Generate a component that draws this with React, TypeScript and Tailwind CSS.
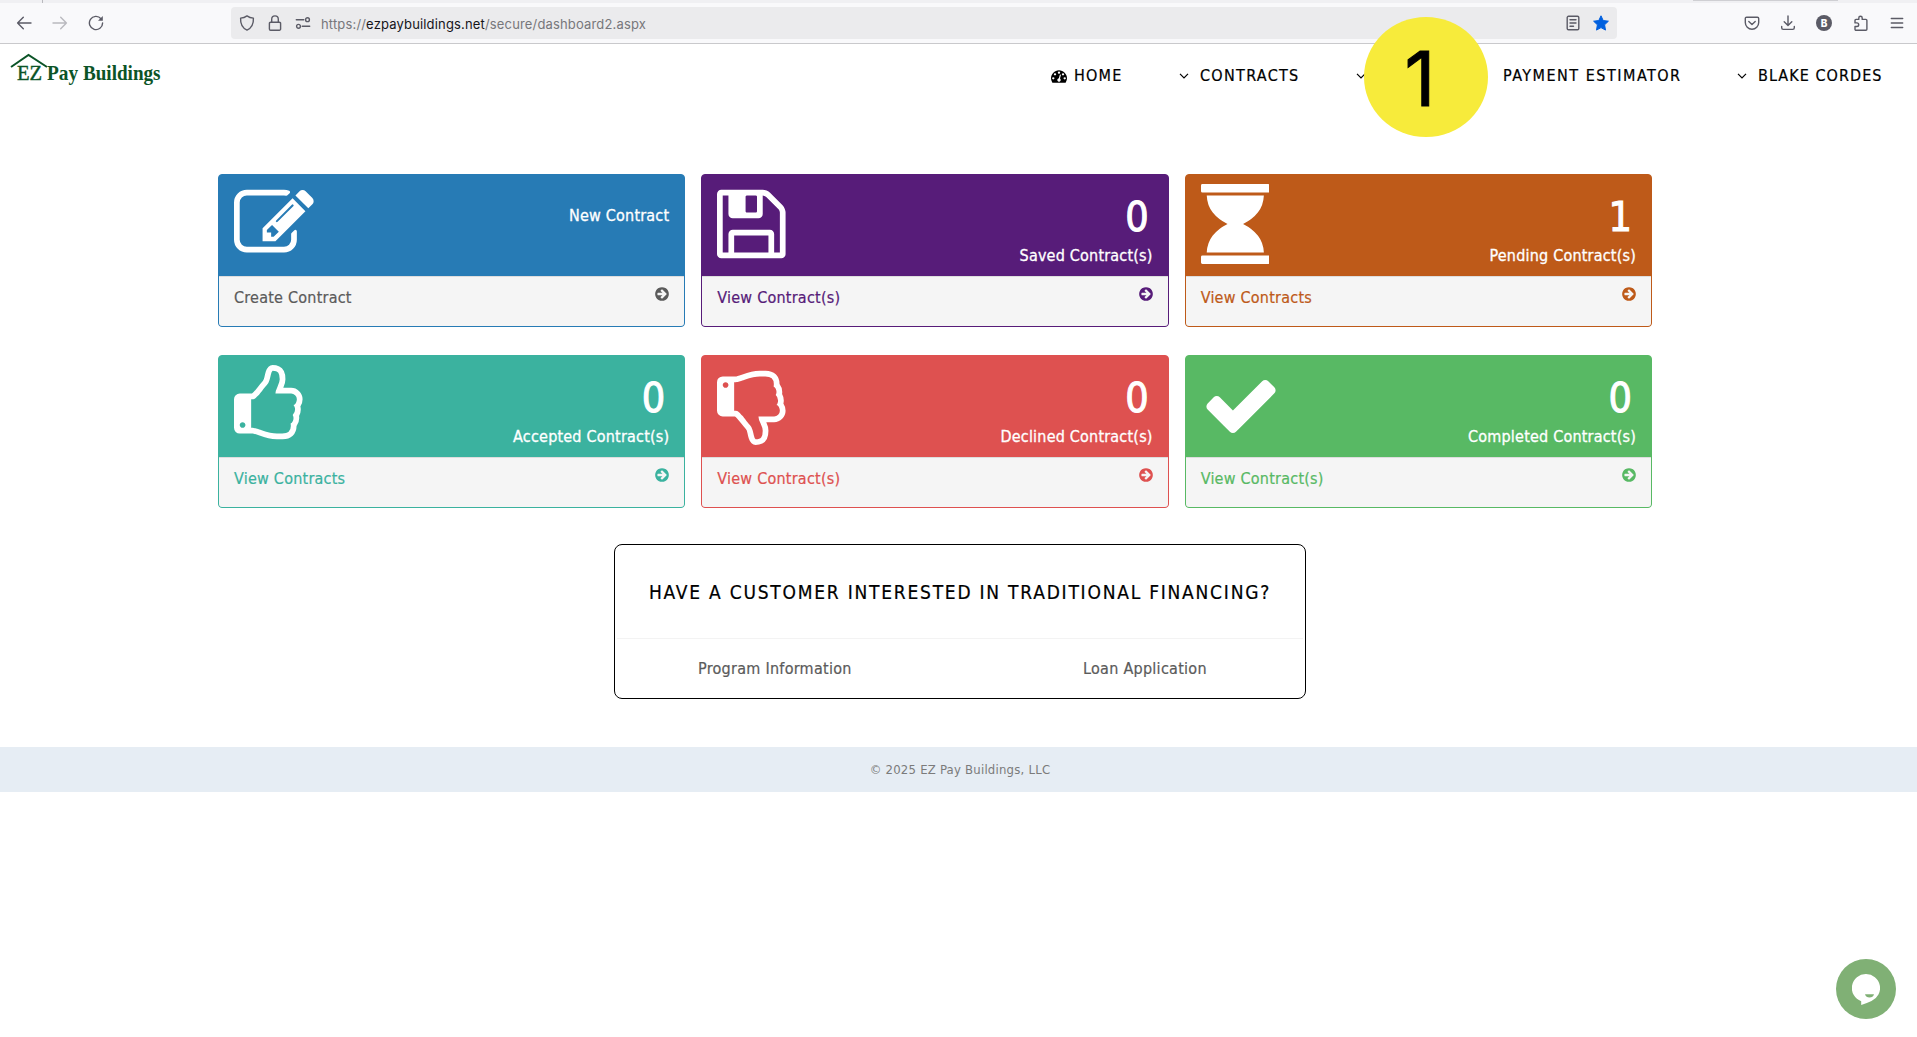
import type { ReactNode } from "react";

const PATHS = {
  edit: "M888 1184l116-116-152-152-116 116v56h96v96h56zm440-720q-16-16-33 1l-350 350q-17 17-1 33t33-1l350-350q17-17 1-33zm80 594v190q0 119-84.5 203.5t-203.5 84.5h-832q-119 0-203.5-84.5t-84.5-203.5v-832q0-119 84.5-203.5t203.5-84.5h832q63 0 117 25 15 7 18 23 3 17-9 29l-49 49q-14 14-32 8-23-6-45-6h-832q-66 0-113 47t-47 113v832q0 66 47 113t113 47h832q66 0 113-47t47-113v-126q0-13 9-22l64-64q15-15 35-7t20 29zm-96-738l288 288-672 672h-288v-288zm444 132l-92 92-288-288 92-92q28-28 68-28t68 28l152 152q28 28 28 68t-28 68z",
  floppy:
    "M512 1536h768v-384h-768v384zm896 0h128v-896q0-14-10-38.5t-20-34.5l-281-281q-10-10-34-20t-39-10v416q0 40-28 68t-68 28h-576q-40 0-68-28t-28-68v-416h-128v1280h128v-416q0-40 28-68t68-28h832q40 0 68 28t28 68v416zm-384-928v-320q0-13-9.5-22.5t-22.5-9.5h-192q-13 0-22.5 9.5t-9.5 22.5v320q0 13 9.5 22.5t22.5 9.5h192q13 0 22.5-9.5t9.5-22.5zm640 32v928q0 40-28 68t-68 28h-1344q-40 0-68-28t-28-68v-1344q0-40 28-68t68-28h928q40 0 88 20t76 48l280 280q28 28 48 76t20 88z",
  hourglass:
    "M160 0h1472q32 0 32 32v128q0 32-32 32h-1472q-32 0-32-32v-128q0-32 32-32zM160 1600h1472q32 0 32 32v128q0 32-32 32h-1472q-32 0-32-32v-128q0-32 32-32zM256 256h1280q-10 220-131 376t-335 264q214 108 335 264t131 376h-1280q10-220 131-376t335-264q-214-108-335-264t-131-376z",
  thumb:
    "M384 1344q0-26-19-45t-45-19-45 19-19 45 19 45 45 19 45-19 19-45zm1152-576q0-51-39-89.5t-89-38.5h-352q0-58 48-159.5t48-160.5q0-98-32-145t-128-47q-26 26-38 85t-30.5 125.5-59.5 109.5q-22 23-77 91-4 5-23 30t-31.5 41-34.5 42.5-40 44-38.5 35.5-40 27-35.5 9h-32v640h32q13 0 31.5 3t33 6.5 38 11 35 11.5 35.5 12.5 29 10.5q211 73 342 73h121q192 0 192-167 0-26-5-56 30-16 47.5-52.5t17.5-73.5-18-69q53-50 53-119 0-25-10-55.5t-25-47.5q32-1 53.5-47t21.5-81zm128-1q0 89-49 163 9 33 9 69 0 77-38 144 3 21 3 43 0 101-60 178 1 139-85 219.5t-227 80.5h-129q-96 0-189.5-22.5t-216.5-65.5q-116-40-138-40h-288q-53 0-90.5-37.5t-37.5-90.5v-640q0-53 37.5-90.5t90.5-37.5h274q36-24 137-155 58-75 107-128 24-25 35.5-85.5t30.5-126.5 62-108q39-37 90-37 84 0 151 32.5t102 101.5 35 186q0 93-48 192h176q104 0 180 76t76 179z",
  check:
    "M1671 566q0 40-28 68l-724 724-136 136q-28 28-68 28t-68-28l-136-136-362-362q-28-28-28-68t28-68l136-136q28-28 68-28t68 28l294 295 656-657q28-28 68-28t68 28l136 136q28 28 28 68z",
  arrow:
    "M1413 896q0-27-18-45l-91-91-362-362q-18-18-45-18t-45 18l-91 91q-18 18-18 45t18 45l189 189h-502q-26 0-45 19t-19 45v128q0 26 19 45t45 19h502l-189 189q-19 19-19 45t19 45l91 91q18 18 45 18t45-18l362-362 91-91q18-18 18-45zm251 0q0 209-103 385.5t-279.5 279.5-385.5 103-385.5-103-279.5-279.5-103-385.5 103-385.5 279.5-279.5 385.5-103 385.5 103 279.5 279.5 103 385.5z",
  gauge:
    "M384 1152q0-53-37.5-90.5t-90.5-37.5-90.5 37.5-37.5 90.5 37.5 90.5 90.5 37.5 90.5-37.5 37.5-90.5zm192-448q0-53-37.5-90.5t-90.5-37.5-90.5 37.5-37.5 90.5 37.5 90.5 90.5 37.5 90.5-37.5 37.5-90.5zm428 481l101-382q6-26-7.5-48.5t-38.5-29.5-48 6.5-30 39.5l-101 382q-60 5-107 43.5t-63 98.5q-20 77 20 146t117 89 146-20 89-117q16-60-6-117t-72-91zm660-33q0-53-37.5-90.5t-90.5-37.5-90.5 37.5-37.5 90.5 37.5 90.5 90.5 37.5 90.5-37.5 37.5-90.5zm-640-640q0-53-37.5-90.5t-90.5-37.5-90.5 37.5-37.5 90.5 37.5 90.5 90.5 37.5 90.5-37.5 37.5-90.5zm448 192q0-53-37.5-90.5t-90.5-37.5-90.5 37.5-37.5 90.5 37.5 90.5 90.5 37.5 90.5-37.5 37.5-90.5zm320 448q0 261-141 483-19 29-54 29h-1402q-35 0-54-29-141-221-141-483 0-182 71-348t191-286 286-191 348-71 348 71 286 191 191 286 71 348z",
};

type CardData = {
  icon: keyof typeof PATHS;
  viewBox: string;
  iconClass: string;
  value?: string;
  label: string;
  link: string;
  color: string;
  linkColor: string;
};

const CARDS: CardData[] = [
  { icon: "edit", viewBox: "0 0 1792 1792", iconClass: "w-20", label: "New Contract", link: "Create Contract", color: "border-[#277bb5] bg-[#277bb5]", linkColor: "text-[#5b5b5b]" },
  { icon: "floppy", viewBox: "128 0 1536 1792", iconClass: "w-[68.6px]", value: "0", label: "Saved Contract(s)", link: "View Contract(s)", color: "border-[#571c79] bg-[#571c79]", linkColor: "text-[#571c79]" },
  { icon: "hourglass", viewBox: "128 0 1536 1792", iconClass: "w-[68.6px]", value: "1", label: "Pending Contract(s)", link: "View Contracts", color: "border-[#be5a19] bg-[#be5a19]", linkColor: "text-[#be5a19]" },
  { icon: "thumb", viewBox: "128 0 1536 1792", iconClass: "w-[68.6px]", value: "0", label: "Accepted Contract(s)", link: "View Contracts", color: "border-[#3bb29f] bg-[#3bb29f]", linkColor: "text-[#3bb29f]" },
  { icon: "thumb", viewBox: "128 0 1536 1792", iconClass: "w-[68.6px] -scale-y-100", value: "0", label: "Declined Contract(s)", link: "View Contract(s)", color: "border-[#de5150] bg-[#de5150]", linkColor: "text-[#de5150]" },
  { icon: "check", viewBox: "0 0 1792 1792", iconClass: "w-20", value: "0", label: "Completed Contract(s)", link: "View Contract(s)", color: "border-[#58b964] bg-[#58b964]", linkColor: "text-[#58b964]" },
];

function Card({ card }: { card: CardData }) {
  return (
    <section className={`flex h-[153px] flex-col overflow-hidden rounded-[4px] border ${card.color}`}>
      <div className="flex h-[101px] shrink-0 justify-between px-[15px] pt-[9px] text-white">
        <svg viewBox={card.viewBox} className={`h-20 shrink-0 fill-current ${card.iconClass}`}>
          <path d={PATHS[card.icon]} />
        </svg>
        <div className="flex flex-col items-end [-webkit-text-stroke:0.3px_white]">
          {card.value ? (
            <>
              <span className="mt-2 pr-1 text-[41px] leading-[50px] [-webkit-text-stroke:1px_white]">{card.value}</span>
              <span className="mt-[2px] text-base leading-6 tracking-[0.2px]">{card.label}</span>
            </>
          ) : (
            <span className="mt-5 text-base leading-6 tracking-[0.2px]">{card.label}</span>
          )}
        </div>
      </div>
      <div className={`flex grow justify-between border-t border-[#ddd] bg-[#f5f5f5] px-[15px] ${card.linkColor}`}>
        <span className="pt-[9px] text-base leading-6 tracking-[0.23px] [-webkit-text-stroke:0.2px_currentColor]">{card.link}</span>
        <svg viewBox="128 0 1536 1792" className="mt-[9px] h-4 w-[14px] fill-current">
          <path d={PATHS.arrow} />
        </svg>
      </div>
    </section>
  );
}

function Chevron() {
  return (
    <svg viewBox="0 0 10 6" className="mr-[11px] h-[6px] w-[10px] shrink-0 fill-none stroke-black">
      <path d="M1 .8l4 4 4-4" strokeWidth="1.2" />
    </svg>
  );
}

function ToolIcon({ className, children }: { className: string; children: ReactNode }) {
  return (
    <svg viewBox="0 0 16 16" className={`h-4 w-4 shrink-0 fill-none stroke-[#5b5b66] stroke-[1.4] ${className}`} strokeLinecap="round" strokeLinejoin="round">
      {children}
    </svg>
  );
}

function BrowserBar() {
  return (
    <div className="flex h-11 flex-col border-b border-[#c9c9cc] bg-[#f9f9fb]">
      <div className="flex h-[3px] shrink-0 bg-[#f0f0f3]">
        <div className="h-[3px] w-[43px] border-r border-[#b9b9be]" />
        <div className="ml-[1650px] h-[1px] w-[145px] bg-[#cfcfd3]" />
      </div>
      <div className="flex h-10 items-center">
        <ToolIcon className="ml-4">
          <path d="M15 8H1.6M7.3 2.3L1.6 8l5.7 5.7" />
        </ToolIcon>
        <ToolIcon className="ml-5 opacity-40">
          <path d="M1 8h13.4M8.7 2.3L14.4 8l-5.7 5.7" />
        </ToolIcon>
        <ToolIcon className="ml-5">
          <path d="M13 3.7A6.6 6.6 0 1 0 14.6 8" />
          <path d="M14.8 1v4.8h-4.8z" fill="#5b5b66" stroke="none" />
        </ToolIcon>
        <div className="ml-[127px] flex h-8 w-[1386px] items-center rounded-[4px] bg-[#ebebed]">
          <ToolIcon className="ml-2">
            <path d="M8 .9c2 1.5 4 2.1 6.4 2.2.3 5.4-1.4 9.7-6.4 12-5-2.3-6.7-6.6-6.4-12C4 3 6 2.4 8 .9z" />
          </ToolIcon>
          <ToolIcon className="ml-3">
            <path d="M3.6 7.2h8.8a1.2 1.2 0 0 1 1.2 1.2v5.6a1.2 1.2 0 0 1-1.2 1.2H3.6a1.2 1.2 0 0 1-1.2-1.2V8.4a1.2 1.2 0 0 1 1.2-1.2zM4.7 7V4.2a3.3 3.3 0 0 1 6.6 0V7" />
          </ToolIcon>
          <ToolIcon className="ml-3">
            <path d="M1.3 4.7h7.5M7.2 11.3h7.5" />
            <circle cx="12.5" cy="4.7" r="1.9" />
            <circle cx="3.5" cy="11.3" r="1.9" />
          </ToolIcon>
          <span className="ml-[10px] mt-[2px] font-['Inter',sans-serif] text-[13px] leading-5 tracking-[0.16px] text-[#77777b]">
            https://<span className="text-[#15141a]">ezpaybuildings.net</span>/secure/dashboard2.aspx
          </span>
          <ToolIcon className="ml-auto">
            <path d="M3.5 1.3h9a1.3 1.3 0 0 1 1.3 1.3v10.800a1.3 1.3 0 0 1-1.3 1.3h-9a1.3 1.3 0 0 1-1.3-1.3V2.6a1.3 1.3 0 0 1 1.3-1.3zM5 4.8h6M5 8h6M5 11.2h3.5" />
          </ToolIcon>
          <svg viewBox="0 0 16 16" className="ml-3 mr-2 h-4 w-4 fill-[#0060df] stroke-[#0060df]" strokeLinejoin="round">
            <path d="M8 .8l2.2 4.7 5.2.7-3.8 3.6.9 5.3L8 12.6l-4.5 2.5.9-5.3L.6 6.2l5.2-.7z" />
          </svg>
        </div>
        <ToolIcon className="ml-[127px]">
          <path d="M2.6 2.2h10.800A1.3 1.3 0 0 1 14.7 3.5v4a6.7 6.7 0 0 1-13.4 0v-4A1.3 1.3 0 0 1 2.6 2.2zM4.8 6.5L8 9.5l3.2-3" />
        </ToolIcon>
        <ToolIcon className="ml-5">
          <path d="M8 .9v9.4M4.2 6.8L8 10.5l3.8-3.7M1.7 11.5v1.3a1.6 1.6 0 0 0 1.6 1.6h9.4a1.6 1.6 0 0 0 1.6-1.6v-1.3" />
        </ToolIcon>
        <div className="ml-5 flex h-4 w-4 items-center justify-center rounded-full bg-[#5b5b66] font-['Inter',sans-serif] text-[10px] font-extrabold leading-none text-white">B</div>
        <ToolIcon className="ml-[21px]">
          <path d="M5.8 4.4V2.9a1.7 1.7 0 0 1 3.4 0v1.5h3.7a1 1 0 0 1 1 1v8.8a1 1 0 0 1-1 1H3a1 1 0 0 1-1-1v-2.7h1.9a1.8 1.8 0 0 0 0-3.6H2V5.4a1 1 0 0 1 1-1z" />
        </ToolIcon>
        <ToolIcon className="ml-5">
          <path d="M2.3 3.5h11.4M2.3 8h11.4M2.3 12.5h11.4" />
        </ToolIcon>
      </div>
    </div>
  );
}

function Logo() {
  return (
    <div className="relative ml-[10px] mt-[9px] flex h-9 w-[152px] font-['Liberation_Serif',serif] text-[21px] leading-6 text-[#0b5427]">
      <svg viewBox="0 0 38 15" className="absolute left-0 top-0 h-[15px] w-[38px] fill-none stroke-[#0b5427] stroke-2">
        <path d="M1 14L18.5 2 37 14" />
      </svg>
      <span className="ml-[7px] mt-[8px] w-[30px] shrink-0 origin-left scale-x-[0.98] [-webkit-text-stroke:0.4px_#0b5427]">EZ</span>
      <span className="mt-[8px] w-[36px] shrink-0 origin-left scale-x-[0.92] font-bold">Pay</span>
      <span className="mt-[8px] origin-left scale-x-[0.91] font-bold">Buildings</span>
    </div>
  );
}

export default function App() {
  return (
    <div className="relative flex min-h-[1037px] w-[1917px] flex-col overflow-hidden bg-white font-['DejaVu_Sans_Condensed','DejaVu_Sans',sans-serif]">
      <BrowserBar />

      <header className="flex h-[130px] items-start justify-between">
        <Logo />
        <nav className="flex w-[866px] pt-[20px] text-base leading-6 text-black [-webkit-text-stroke:0.2px_black]">
          <a className="flex w-[128px] items-center tracking-[1.2px]">
            <svg viewBox="0 0 1792 1792" className="mr-[7px] h-4 w-4 fill-current">
              <path d={PATHS.gauge} />
            </svg>
            HOME
          </a>
          <a className="flex w-[177px] items-center tracking-[1.3px]">
            <Chevron />
            CONTRACTS
          </a>
          <a className="flex w-[146px] items-center">
            <Chevron />
          </a>
          <a className="flex w-[235px] items-center pl-[1px] tracking-[1.5px]">PAYMENT ESTIMATOR</a>
          <a className="flex items-center tracking-[1.05px]">
            <Chevron />
            BLAKE CORDES
          </a>
        </nav>
      </header>

      <main className="flex flex-col items-center">
        <div className="mr-[47px] grid w-[1434px] grid-cols-3 gap-x-4 gap-y-7">
          {CARDS.map((card) => (
            <Card key={card.label} card={card} />
          ))}
        </div>

        <section className="ml-[3px] mt-9 flex h-[155px] w-[692px] flex-col rounded-lg border border-black">
          <h2 className="mx-[2px] flex h-[94px] items-center justify-center border-b border-[#f3f3f3] pt-[1px] text-[19px] tracking-[1.77px] text-black [-webkit-text-stroke:0.2px_black]">
            HAVE A CUSTOMER INTERESTED IN TRADITIONAL FINANCING?
          </h2>
          <div className="flex pt-[18px] text-base leading-6 tracking-[0.27px] text-[#5b5b5b] [-webkit-text-stroke:0.2px_#5b5b5b]">
            <a className="ml-[83px] w-[385px]">Program Information</a>
            <a>Loan Application</a>
          </div>
        </section>
      </main>

      <footer className="mt-12 flex h-[45px] items-center justify-center bg-[#e6edf4] pl-[3px] text-[13px] tracking-[0.22px] text-[#7b7b7b]">
        © 2025 EZ Pay Buildings, LLC
      </footer>

      <div className="absolute left-[1364px] top-[17px] flex h-[120px] w-[124px] items-center justify-center rounded-[50%] bg-[#f7eb3b] font-['Inter',sans-serif] text-[76px] leading-none text-black">
        <span className="-ml-3 mt-[1px] [-webkit-text-stroke:1px_black]">1</span>
      </div>

      <button className="absolute left-[1836px] top-[959px] flex h-[60px] w-[60px] items-center justify-center rounded-full bg-[#80b075]">
        <svg viewBox="0 0 28 31" className="h-[31px] w-7">
          <path d="M14 0a14 14 0 0 1 5.5 26.9Q15 29 9.2 31V27.2A14 14 0 0 1 14 0z" fill="#fff" />
          <path d="M13 20.2h9q-1 3.2-4.5 3.2T13 20.2z" fill="#80b075" />
        </svg>
      </button>
    </div>
  );
}
